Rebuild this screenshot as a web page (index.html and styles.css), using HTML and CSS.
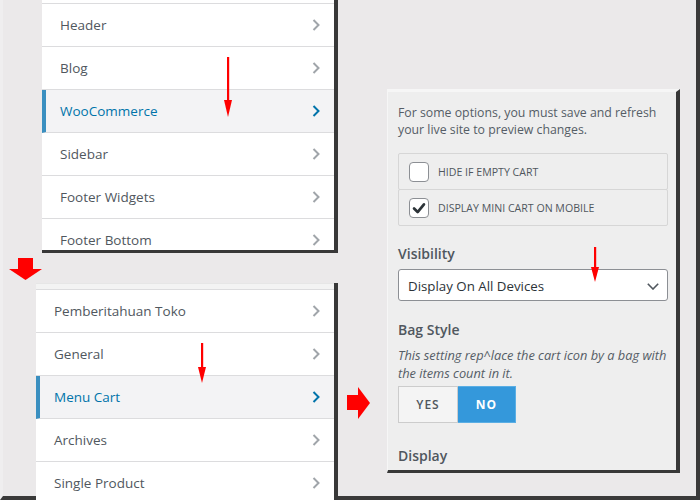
FILE: index.html
```html
<!DOCTYPE html>
<html lang="en">
<head>
<meta charset="utf-8">
<title>Customizer – Menu Cart</title>
<link rel="stylesheet" href="styles.css">
</head>
<body>
<div class="stage">
  <div class="col-left">
    <nav class="panel panel-top">
      <ul class="menu">
        <li class="item"><span>Header</span><svg class="chev" viewBox="0 0 8 12"><path d="M1.5 1 L6.5 6 L1.5 11"/></svg></li>
        <li class="item"><span>Blog</span><svg class="chev" viewBox="0 0 8 12"><path d="M1.5 1 L6.5 6 L1.5 11"/></svg></li>
        <li class="item is-active"><span>WooCommerce</span><svg class="chev" viewBox="0 0 8 12"><path d="M1.5 1 L6.5 6 L1.5 11"/></svg></li>
        <li class="item"><span>Sidebar</span><svg class="chev" viewBox="0 0 8 12"><path d="M1.5 1 L6.5 6 L1.5 11"/></svg></li>
        <li class="item"><span>Footer Widgets</span><svg class="chev" viewBox="0 0 8 12"><path d="M1.5 1 L6.5 6 L1.5 11"/></svg></li>
        <li class="item"><span>Footer Bottom</span><svg class="chev" viewBox="0 0 8 12"><path d="M1.5 1 L6.5 6 L1.5 11"/></svg></li>
      </ul>
    </nav>

    <nav class="panel panel-bottom">
      <div class="panel-head"></div>
      <ul class="menu">
        <li class="item"><span>Pemberitahuan Toko</span><svg class="chev" viewBox="0 0 8 12"><path d="M1.5 1 L6.5 6 L1.5 11"/></svg></li>
        <li class="item"><span>General</span><svg class="chev" viewBox="0 0 8 12"><path d="M1.5 1 L6.5 6 L1.5 11"/></svg></li>
        <li class="item is-active"><span>Menu Cart</span><svg class="chev" viewBox="0 0 8 12"><path d="M1.5 1 L6.5 6 L1.5 11"/></svg></li>
        <li class="item"><span>Archives</span><svg class="chev" viewBox="0 0 8 12"><path d="M1.5 1 L6.5 6 L1.5 11"/></svg></li>
        <li class="item"><span>Single Product</span><svg class="chev" viewBox="0 0 8 12"><path d="M1.5 1 L6.5 6 L1.5 11"/></svg></li>
      </ul>
    </nav>
  </div>

  <div class="col-right">
    <section class="options">
      <p class="desc">For some options, you must save and refresh your live site to preview changes.</p>

      <div class="checks">
        <label class="check"><span class="box"></span><span class="check-label">Hide if empty cart</span></label>
        <label class="check"><span class="box"><svg viewBox="0 0 20 20"><path d="M4.5 10.5 L8.5 14.5 L15.5 6"/></svg></span><span class="check-label">Display mini cart on mobile</span></label>
      </div>

      <h3 class="field-title t-visibility">Visibility</h3>
      <div class="select">
        <span>Display On All Devices</span>
        <svg class="select-chev" viewBox="0 0 12 7"><path d="M0.8 0.8 L6 6 L11.2 0.8"/></svg>
      </div>

      <h3 class="field-title t-bag">Bag Style</h3>
      <p class="note">This setting rep^lace the cart icon by a bag with the items count in it.</p>
      <div class="toggle">
        <span class="btn btn-yes">YES</span>
        <span class="btn btn-no">NO</span>
      </div>

      <h3 class="field-title t-display">Display</h3>
    </section>
  </div>

  <!-- red annotation arrows laid over the panels -->
  <svg class="mark mark-down-big" viewBox="0 0 33 22"><polygon points="9,0 24,0 24,11 33,11 16.5,22 0,11 9,11"/></svg>
  <svg class="mark mark-right-big" viewBox="0 0 23 32"><polygon points="0,8 11,8 11,0 23,16 11,32 11,23 0,23"/></svg>
  <svg class="mark thin thin-1" viewBox="0 0 10 60" preserveAspectRatio="none"><rect x="4" y="0" width="2.2" height="46"/><polygon points="1,43 9,43 5,60"/></svg>
  <svg class="mark thin thin-2" viewBox="0 0 10 40" preserveAspectRatio="none"><rect x="4" y="0" width="2.2" height="27"/><polygon points="1,24 9,24 5,40"/></svg>
  <svg class="mark thin thin-3" viewBox="0 0 10 35" preserveAspectRatio="none"><rect x="4" y="0" width="2.2" height="23"/><polygon points="1,20 9,20 5,35"/></svg>
</div>
</body>
</html>
```
FILE: styles.css
```css
* {
  box-sizing: border-box;
}

html,
body {
  margin: 0;
  padding: 0;
  overflow: hidden;
}

body {
  font-family: "Open Sans", "Noto Sans", sans-serif;
  color: #50575e;
}

ul {
  list-style: none;
  margin: 0;
  padding: 0;
}

h3,
p {
  margin: 0;
}

/* canvas */
.stage {
  position: relative;
  display: flex;
  width: 700px;
  height: 500px;
  background: #ebe9ea;
  border-left: 3px solid #efeeef;
  border-right: 4px solid #3a3a3a;
  border-bottom: 4px solid #3a3a3a;
}

.col-left {
  flex: none;
  width: 335px;
}

.col-right {
  flex: 1;
}

/* section menus */
.panel {
  background: #fff;
  border-right: 4px solid #383838;
  overflow: hidden;
}

.panel-top {
  margin-left: 39px;
  width: 296px;
  height: 253px;
  padding-top: 3px;
  border-bottom: 3px solid #383838;
}

.panel-bottom {
  margin-left: 33px;
  margin-top: 30px;
  width: 302px;
  height: 225px;
}

.panel-head {
  height: 7px;
  background: #f3f3f3;
  border-top: 1px solid #e6e6e6;
  border-bottom: 1px solid #dcdcde;
}

.panel-top .menu {
  border-top: 1px solid #dcdcde;
}

.item {
  display: flex;
  align-items: center;
  justify-content: space-between;
  height: 43px;
  padding: 0 14px 0 18px;
  border-bottom: 1px solid #dcdcde;
  font-size: 13.5px;
  color: #50575e;
}

.item.is-active {
  background: #f3f3f5;
  border-left: 4px solid #3a8fc0;
  padding-left: 14px;
  color: #0073aa;
}

.chev {
  width: 8px;
  height: 12px;
  fill: none;
  stroke: #a0a5aa;
  stroke-width: 2;
}

.is-active .chev {
  stroke: #0073aa;
}

/* options panel */
.options {
  margin-left: 49px;
  margin-top: 89px;
  width: 293px;
  height: 384px;
  padding: 0 8px 0 10px;
  background: #eeeeee;
  border-top: 3px solid #f6f6f6;
  border-left: 1px solid #f6f6f6;
  border-right: 4px solid #383838;
  border-bottom: 3px solid #383838;
  overflow: hidden;
}

.desc {
  margin-top: 12px;
  font-size: 12.3px;
  line-height: 17px;
  color: #555d66;
}

.checks {
  margin-top: 15px;
}

.check {
  display: flex;
  align-items: center;
  height: 37px;
  padding-left: 10px;
  border: 1px solid #d6d6d6;
  border-radius: 2px;
  background: #eeeeee;
}

.check + .check {
  margin-top: -1px;
}

.box {
  display: flex;
  width: 20px;
  height: 20px;
  margin-right: 9px;
  background: #fff;
  border: 1px solid #8c8f94;
  border-radius: 4px;
}

.box svg {
  width: 18px;
  height: 18px;
  fill: none;
  stroke: #2c3338;
  stroke-width: 3;
  stroke-linecap: round;
  stroke-linejoin: round;
}

.check-label {
  font-size: 10.6px;
  text-transform: uppercase;
  color: #50575e;
}

.field-title {
  font-size: 14px;
  font-weight: 600;
  line-height: 18px;
  color: #50575e;
}

.t-visibility {
  margin-top: 19px;
}

.t-bag {
  margin-top: 20px;
}

.t-display {
  margin-top: 24px;
}

.select {
  display: flex;
  align-items: center;
  justify-content: space-between;
  height: 32px;
  margin-top: 6px;
  padding: 2px 8px 0 9px;
  background: #fff;
  border: 1px solid #8c8f94;
  border-radius: 3px;
  font-size: 13.3px;
  color: #2c3338;
}

.select-chev {
  width: 12px;
  height: 7px;
  fill: none;
  stroke: #50575e;
  stroke-width: 1.6;
}

.note {
  margin-top: 7px;
  font-size: 12.8px;
  font-style: italic;
  line-height: 18px;
  color: #555d66;
}

.toggle {
  display: flex;
  height: 37px;
  margin-top: 4px;
}

.btn {
  display: flex;
  align-items: center;
  justify-content: center;
  height: 100%;
  font-size: 12px;
  font-weight: 600;
  letter-spacing: 1px;
}

.btn-yes {
  width: 60px;
  background: #f4f4f4;
  border: 1px solid #cccccc;
  color: #50575e;
}

.btn-no {
  width: 58px;
  background: #3498db;
  border: 1px solid #5aaee4;
  border-left: 0;
  color: #fff;
  font-weight: 700;
}

/* red annotation arrows */
.mark {
  position: absolute;
  fill: #ff0000;
}

.mark-down-big {
  left: 6px;
  top: 258px;
  width: 33px;
  height: 22px;
}

.mark-right-big {
  left: 344px;
  top: 387px;
  width: 23px;
  height: 32px;
}

.thin {
  width: 10px;
}

.thin-1 {
  left: 220px;
  top: 57px;
  height: 60px;
}

.thin-2 {
  left: 194px;
  top: 343px;
  height: 40px;
}

.thin-3 {
  left: 587px;
  top: 247px;
  height: 35px;
}
```
